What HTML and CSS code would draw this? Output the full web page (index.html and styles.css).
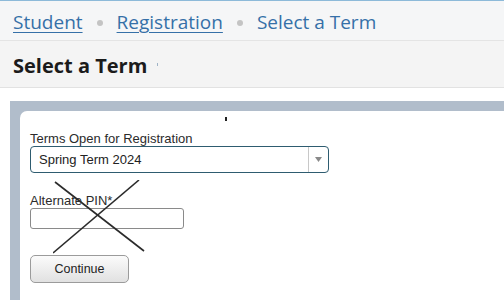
FILE: index.html
```html
<!DOCTYPE html>
<html>
<head>
<meta charset="utf-8">
<link rel="stylesheet" href="styles.css">
</head>
<body>
<div class="topline"></div>
<nav class="breadcrumb">
  <a class="crumb link" href="#">Student</a>
  <span class="dot"></span>
  <a class="crumb link" href="#">Registration</a>
  <span class="dot"></span>
  <span class="crumb current">Select a Term</span>
</nav>
<header class="titlebar">
  <h1 class="title">Select a Term</h1>
  <span class="tick"></span>
</header>
<div class="spacer"></div>
<main class="frame">
  <section class="panel">
    <span class="speck"></span>
    <label class="label">Terms Open for Registration</label>
    <div class="select">
      <span class="select-text">Spring Term 2024</span>
      <span class="select-arrow"><svg width="7" height="5" viewBox="0 0 7 5"><path d="M0 0H7L3.5 5Z" fill="#8a8a8a"/></svg></span>
    </div>
    <label class="label pin-label">Alternate PIN*</label>
    <input class="pin" type="text">
    <button class="btn">Continue</button>
    <svg class="cross" width="110" height="80" viewBox="0 0 110 80">
      <line x1="2" y1="2" x2="91" y2="71" stroke="#2b2b2b" stroke-width="1.6"/>
      <line x1="86" y1="0" x2="0" y2="73" stroke="#2b2b2b" stroke-width="1.6"/>
    </svg>
  </section>
</main>
</body>
</html>
```
FILE: styles.css
```css
html, body {
  margin: 0;
  padding: 0;
  background: #ffffff;
  height: 300px;
  overflow: hidden;
}
body {
  display: flex;
  flex-direction: column;
  font-family: "Liberation Sans", Arial, sans-serif;
}
.topline {
  height: 1px;
  background: #8dbad9;
}
.breadcrumb {
  height: 40px;
  background: #f5f6f7;
  border-bottom: 1px solid #e4e4e4;
  display: flex;
  align-items: center;
  padding: 4px 0 0 13px;
  font-family: "Open Sans", sans-serif;
  font-size: 19px;
  box-sizing: border-box;
}
.crumb {
  color: #3570a8;
  line-height: 1;
}
.crumb.link {
  text-decoration: underline;
  text-decoration-thickness: 1px;
  text-underline-offset: 3px;
}
.dot {
  width: 6px;
  height: 6px;
  border-radius: 50%;
  background: #c4c4c4;
  margin: 0 14px;
}
.titlebar {
  height: 47px;
  background: #f4f4f4;
  border-bottom: 1px solid #e2e2e2;
  display: flex;
  align-items: center;
  padding-left: 13px;
  box-sizing: border-box;
}
.title {
  margin: 0;
  font-family: "Open Sans", sans-serif;
  font-weight: 700;
  font-size: 20px;
  color: #1b1b1b;
  line-height: 1;
  padding-top: 3px;
}
.tick {
  width: 1px;
  height: 3px;
  background: #9fb3c6;
  margin: 0 0 0 10px;
}
.spacer {
  height: 13px;
}
.frame {
  flex: 1;
  margin-left: 10px;
  background: #b1bdcb;
  padding: 10px 0 0 10px;
  display: flex;
}
.panel {
  position: relative;
  flex: 1;
  background: #ffffff;
  border-top-left-radius: 7px;
  padding: 20px 0 0 10px;
  display: flex;
  flex-direction: column;
  align-items: flex-start;
}
.speck {
  position: absolute;
  left: 205px;
  top: 6px;
  width: 2px;
  height: 4px;
  background: #222;
}
.label {
  font-size: 13px;
  color: #2b2b2b;
  line-height: 15px;
}
.select {
  width: 299px;
  height: 27px;
  box-sizing: border-box;
  border: 1px solid #2e5c70;
  border-radius: 4px;
  display: flex;
  align-items: center;
}
.select-text {
  flex: 1;
  font-size: 13px;
  color: #222;
  padding-left: 8px;
}
.select-arrow {
  width: 19px;
  height: 100%;
  border-left: 1px solid #c8c8c8;
  display: flex;
  align-items: center;
  justify-content: center;
}
.pin-label {
  margin-top: 20px;
}
.pin {
  margin: 0;
  width: 154px;
  height: 21px;
  box-sizing: border-box;
  border: 1px solid #8a8a8a;
  border-radius: 3px;
  padding: 0;
  background: #fff;
}
.btn {
  margin-top: 26px;
  width: 99px;
  height: 28px;
  box-sizing: border-box;
  border: 1px solid #9b9b9b;
  border-radius: 5px;
  background: linear-gradient(#fbfbfb, #e1e1e1);
  font-family: "Liberation Sans", Arial, sans-serif;
  font-size: 12.5px;
  color: #222;
  padding: 0;
}
.cross {
  position: absolute;
  left: 33px;
  top: 69px;
}
```
